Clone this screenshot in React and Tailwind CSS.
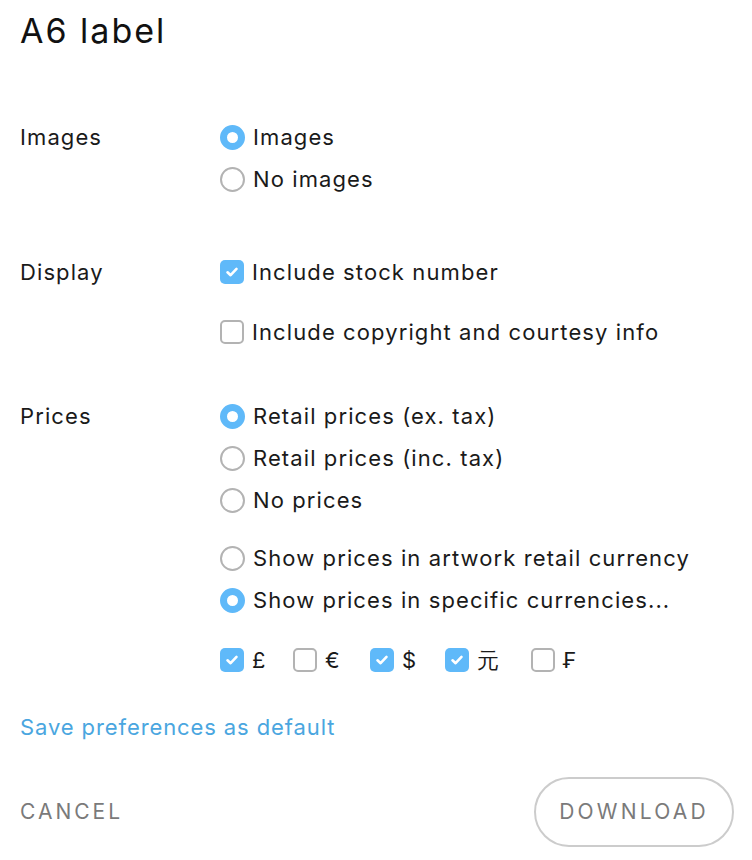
import React, { useState } from "react";

const font = { fontFamily: "Inter, 'Open Sans', sans-serif" };

const Radio = ({ checked, label, onClick }) => (
  <button type="button" onClick={onClick} className="flex items-center gap-2 h-[42px] text-left">
    {checked ? (
      <span className="w-[25px] h-[25px] rounded-full border-[7px] border-[#5fb9f9] bg-white flex-shrink-0" />
    ) : (
      <span className="w-[25px] h-[25px] rounded-full border-2 border-[#b3b3b3] bg-white flex-shrink-0" />
    )}
    <span className="text-[22px] tracking-[1.1px] text-[#1a1a1a]">{label}</span>
  </button>
);

const Check = ({ checked, label, onClick, className = "" }) => (
  <button type="button" onClick={onClick} className={`flex items-center gap-2 text-left ${className}`}>
    {checked ? (
      <span className="w-[24px] h-[24px] rounded-[5px] bg-[#5fb9f9] flex items-center justify-center flex-shrink-0">
        <svg width="14" height="14" viewBox="0 0 14 14" fill="none">
          <path d="M2.5 7.3 L5.6 10.2 L11.5 3.9" stroke="white" strokeWidth="2.6" strokeLinecap="round" strokeLinejoin="round" />
        </svg>
      </span>
    ) : (
      <span className="w-[24px] h-[24px] rounded-[5px] border-2 border-[#b3b3b3] bg-white flex-shrink-0" />
    )}
    <span className="text-[22px] tracking-[1.1px] text-[#1a1a1a]">{label}</span>
  </button>
);

const currencyList = [
  { sym: "£", cls: "w-[73px]" },
  { sym: "€", cls: "w-[77px]" },
  { sym: "$", cls: "w-[75px]" },
  { sym: "元", cls: "w-[86px]" },
  { sym: "₣", cls: "" },
];

export default function App() {
  const [images, setImages] = useState("images");
  const [stock, setStock] = useState(true);
  const [copyright, setCopyright] = useState(false);
  const [prices, setPrices] = useState("ex");
  const [currencyMode, setCurrencyMode] = useState("specific");
  const [currencies, setCurrencies] = useState({ "£": true, "€": false, "$": true, "元": true, "₣": false });

  const toggle = (c) => setCurrencies({ ...currencies, [c]: !currencies[c] });

  return (
    <div className="bg-white min-h-screen w-[752px] px-5" style={font}>
      <h1 className="h-[62px] flex items-center text-[34px] tracking-[2px] text-[#111] leading-none font-normal">A6 label</h1>

      <div className="flex mt-[54px]">
        <div className="w-[200px] h-[42px] flex items-center text-[22px] tracking-[1.1px] text-[#1a1a1a]">Images</div>
        <div className="flex flex-col">
          <Radio checked={images === "images"} label="Images" onClick={() => setImages("images")} />
          <Radio checked={images === "none"} label="No images" onClick={() => setImages("none")} />
        </div>
      </div>

      <div className="flex mt-[51px]">
        <div className="w-[200px] h-[42px] flex items-center text-[22px] tracking-[1.1px] text-[#1a1a1a]">Display</div>
        <div className="flex flex-col gap-[18px]">
          <Check className="h-[42px]" checked={stock} label="Include stock number" onClick={() => setStock(!stock)} />
          <Check className="h-[42px]" checked={copyright} label="Include copyright and courtesy info" onClick={() => setCopyright(!copyright)} />
        </div>
      </div>

      <div className="flex mt-[42px]">
        <div className="w-[200px] h-[42px] flex items-center text-[22px] tracking-[1.1px] text-[#1a1a1a]">Prices</div>
        <div className="flex flex-col">
          <Radio checked={prices === "ex"} label="Retail prices (ex. tax)" onClick={() => setPrices("ex")} />
          <Radio checked={prices === "inc"} label="Retail prices (inc. tax)" onClick={() => setPrices("inc")} />
          <Radio checked={prices === "none"} label="No prices" onClick={() => setPrices("none")} />
          <div className="mt-4 flex flex-col">
            <Radio checked={currencyMode === "artwork"} label="Show prices in artwork retail currency" onClick={() => setCurrencyMode("artwork")} />
            <Radio checked={currencyMode === "specific"} label="Show prices in specific currencies..." onClick={() => setCurrencyMode("specific")} />
          </div>
          <div className="mt-[18px] h-[42px] flex items-center">
            {currencyList.map((c) => (
              <Check key={c.sym} className={c.cls} checked={currencies[c.sym]} label={c.sym} onClick={() => toggle(c.sym)} />
            ))}
          </div>
        </div>
      </div>

      <a href="#" className="block mt-[26px] text-[22px] tracking-[0.9px] text-[#4aa6e0] leading-[40px]">Save preferences as default</a>

      <div className="flex items-center justify-between mt-[30px]">
        <button type="button" className="text-[21px] tracking-[3px] text-[#7a7a7a] uppercase">Cancel</button>
        <button type="button" className="w-[200px] h-[70px] -mr-[2px] rounded-full border-2 border-[#cccccc] text-[21px] tracking-[3.2px] text-[#7a7a7a] uppercase">Download</button>
      </div>
    </div>
  );
}
